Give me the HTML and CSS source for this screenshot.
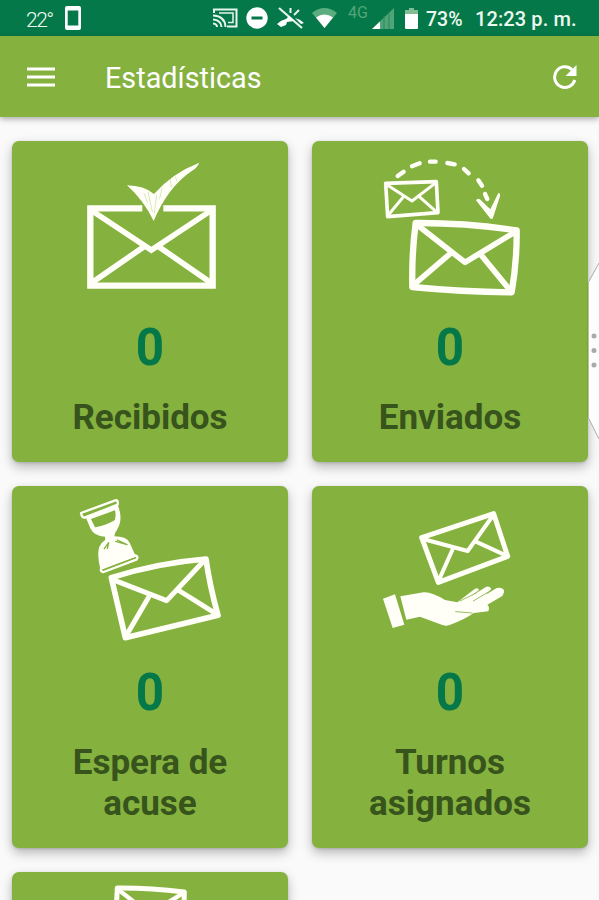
FILE: index.html
```html
<!DOCTYPE html>
<html lang="es">
<head>
<meta charset="utf-8">
<title>Estadísticas</title>
<link rel="stylesheet" href="styles.css">
</head>
<body>
<div class="screen">
  <div class="status">
    <span class="temp">22°</span>
    <svg class="phone" width="16" height="24" viewBox="0 0 16 24"><path fill="#fff" fill-rule="evenodd" d="M2 0H14Q16 0 16 2V22Q16 24 14 24H2Q0 24 0 22V2Q0 0 2 0ZM2.700 4.500V19.500H13.300V4.500Z"/></svg>
    <svg class="cast" width="25" height="20" viewBox="0 0 25 20" fill="none" stroke="#e6f5ea" stroke-width="2"><path d="M1 5V1.500H23.500V18.500H14"/><path d="M6 5H20V14.500H15" stroke-width="1.500"/><path d="M0 7.500Q12 8 12.500 19M0 11.500Q8 12 8.500 19M0 15.500Q4 16 4 19"/></svg>
    <svg class="dnd" width="22" height="22" viewBox="0 0 22 22"><circle cx="11" cy="11" r="10.700" fill="#fff"/><path d="M5.500 11H16.500" stroke="#047848" stroke-width="3"/></svg>
    <svg class="call" width="27" height="22" viewBox="0 0 27 22" fill="none" stroke="#e6f5ea" stroke-width="2"><path d="M2 1L25 21" stroke-width="2.200"/><path d="M13.500 1V6M22 3L17 8"/><path fill="#fff" stroke="none" d="M0 17Q4 13 9 12L12 9L17 14L10 15L9 18L4 20ZM18 11Q23 12 27 16L24 17Z"/></svg>
    <svg class="wifi" width="25" height="20" viewBox="0 0 25 20"><path fill="#5bad80" d="M0 5Q12.500-5 25 5L12.500 20Z"/><path fill="#fff" d="M4 9.500Q12.500 3.500 21 9.500L12.500 20Z"/></svg>
    <span class="network">4G</span>
    <svg class="signal" width="22" height="21" viewBox="0 0 22 21"><path fill="#51a477" d="M0 21L22 0V21Z"/><path fill="#fff" d="M0 21L8 13.500V21Z"/><path d="M12 8V21M17 4V21" stroke="#24895d" stroke-width="1"/></svg>
    <svg class="battery" width="13" height="21" viewBox="0 0 13 21"><path fill="#80bd94" d="M4 0H9V2H13V7H0V2H4Z"/><path fill="#fff" d="M0 6H13V20Q13 21 12 21H1Q0 21 0 20Z"/></svg>
    <span class="percent">73%</span>
    <span class="time">12:23 p. m.</span>
  </div>
  <header class="appbar">
    <svg class="menu" width="28" height="20" viewBox="0 0 28 20"><path d="M0 2H28M0 10H28M0 18H28" stroke="#fff" stroke-width="2.800"/></svg>
    <h1>Estadísticas</h1>
    <svg class="refresh" width="26" height="26" viewBox="0 0 26 26"><path d="M20.200 5.800A10.300 10.300 0 1 0 22.800 16" fill="none" stroke="#fff" stroke-width="3"/><path d="M24.500 1V12H13.500Z" fill="#fff"/></svg>
  </header>
  <main class="grid">
    <section class="card">
      <svg class="art" viewBox="0 0 276 165"><g transform="translate(58 9) scale(.33333)">
        <path d="M217 175H61V407H428V175H280" stroke-width="19" stroke-linejoin="miter" stroke-linecap="butt"/>
        <path d="M67 183L244 300L421 183M67 397L219 292M421 397L269 292" stroke-width="17" stroke-linejoin="miter"/>
        <path class="solid" d="M171 106Q222 107 252 132Q307 69 388 38Q380 55 365 63Q294 111 251 213Q221 151 171 106Z"/>
        <path class="sketch" d="M222 130L232 157M234 127L247 185M260 135L253 190M276 115L269 145M301 90L304 111M317 81L320 93"/>
      </g></svg>
      <div class="number">0</div><div class="label">Recibidos</div>
    </section>
    <section class="card">
      <svg class="art" viewBox="0 0 276 165"><g transform="translate(58 9) scale(.33333)">
        <path d="M47 100L199 95L204 188L53 200Z" stroke-width="11"/>
        <path d="M47 102L126 153L199 97M53 197L98 143M202 188L147 139" stroke-width="9"/>
        <path d="M83 78L101 65M126 49L149 40M180 35L197 35M232 39L254 43M282 57L296 70M325 91L336 107M345 132L352 147" stroke-width="13"/>
        <path class="solid" d="M318 151Q322 143 330 148L361 178L385 129Q392 129 390 139L368 206Q363 208 359 203Z"/>
        <path d="M137 219Q285 218 440 241Q441 335 425 427Q278 426 127 411Q125 308 137 219Z" stroke-width="19"/>
        <path d="M139 223L285 337L435 246M132 404L238 313M420 421L335 317" stroke-width="17"/>
      </g></svg>
      <div class="number">0</div><div class="label">Enviados</div>
    </section>
    <section class="card">
      <svg class="art" viewBox="0 0 276 165"><g transform="translate(53 4) scale(.33333)">
        <path d="M48 69L151 31Q160 29 158 44L59 83Q51 84 48 69ZM108 236L211 196Q222 199 214 209L116 246Q106 247 108 236Z" stroke-width="7"/>
        <path class="solid" fill-rule="evenodd" d="M61 79L158 44Q176 88 156 119Q148 130 148 139Q184 139 194 158L213 200L106 238Q95 193 103 170Q108 158 121 149L120 140Q88 140 76 115ZM78 87L90 112Q121 107 149 91Q154 76 150 61Z"/>
        <path d="M118 176L131 158L127 175M157 150L186 164L152 154" stroke="#85b13f" stroke-width="4"/>
        <path d="M139 263Q276 219 423 207Q434 287 459 376L181 443Z" stroke-width="17"/>
        <path d="M143 269L305 332L419 210M183 438L250 323M456 373L344 303" stroke-width="15"/>
      </g></svg>
      <div class="number">0</div><div class="label">Espera de<br>acuse</div>
    </section>
    <section class="card">
      <svg class="art" viewBox="0 0 276 165"><g transform="translate(58 14) scale(.33333)">
        <path d="M155 113L371 41L413 169L205 247Z" stroke-width="15"/>
        <path d="M159 117L293 153L370 45M206 242L247 150M409 167L316 124" stroke-width="12"/>
        <path class="solid" d="M39 296L75 283L103 374L68 384ZM91 289L161 277Q184 275 225 300L262 307L315 266Q326 263 327 270L303 289L349 260Q361 257 364 267L347 284L380 264Q397 260 402 271Q403 282 397 288L352 314Q360 320 355 334L311 339Q287 357 237 376Q224 379 211 373L150 350L109 359Z"/>
        <path d="M270 303L320 278M310 303L355 276M257 335L306 339" stroke="#85b13f" stroke-width="2.500"/>
      </g></svg>
      <div class="number">0</div><div class="label">Turnos<br>asignados</div>
    </section>
    <section class="card">
      <svg class="art" viewBox="0 0 276 165"><g transform="translate(-12 -42) scale(.33333)">
        <path d="M352 174Q445 173 553 186L550 315L345 309Z" stroke-width="15"/>
        <path d="M354 178L448 252L550 189M348 302L420 235M547 312L485 235" stroke-width="13"/>
      </g></svg>
    </section>
  </main>
  <svg class="edge" width="12" height="180" viewBox="0 0 12 180"><path d="M12 4L1 24V158L12 180Z" fill="#fdfdfd"/><path d="M12 4L1 24M1 158L12 180" stroke="#aaa" fill="none"/><path d="M1 24V158" stroke="#719536"/><g fill="#aaa"><circle cx="7" cy="77" r="2.500"/><circle cx="7" cy="91.500" r="2.500"/><circle cx="7" cy="106" r="2.500"/></g></svg>
</div>
</body>
</html>
```
FILE: styles.css
```css
* { box-sizing: border-box; }
body { margin: 0; background: #fafafa; font-family: Roboto, sans-serif; }
svg { display: block; flex: none; }
.screen { position: relative; height: 900px; overflow: hidden; }
.status { height: 36px; background: #047848; color: #eef8ef; display: flex; align-items: center; white-space: nowrap; }
.temp { width: 24px; margin-left: 26px; padding-top: 3px; font-size: 21px; font-weight: 300; letter-spacing: -1.500px; }
.phone { margin-left: 15px; }
.cast { margin-left: 132px; }
.dnd { margin-left: 8px; }
.call { margin-left: 9px; }
.wifi { margin-left: 8px; }
.network { width: 23px; margin-left: 11px; padding-bottom: 11px; color: #54a57a; font-size: 16px; }
.signal { margin-left: 1px; }
.battery { margin-left: 11px; }
.percent { width: 49px; margin-left: 8px; font-size: 19.500px; font-weight: 500; padding-top: 2px; }
.time { font-size: 20px; font-weight: 500; padding-top: 2px; letter-spacing: .1px; }
.appbar { height: 81px; padding: 0 21px 0 27px; background: #85b13f; color: #fff; display: flex; align-items: center; box-shadow: 0 2px 6px #0005; }
.appbar h1 { flex: 1; margin: 3px 0 0 50px; font-size: 28.800px; font-weight: 400; line-height: 36px; }
.grid { display: grid; grid-template-columns: 276px 276px; gap: 24px; padding: 24px 12px; }
.card { background: #85b13f; border-radius: 7px; text-align: center; padding-bottom: 24px; box-shadow: 0 5px 12px #0004, 0 1px 3px #0002; }
.art { width: 276px; height: 165px; fill: none; stroke: #fffff8; stroke-linecap: round; stroke-linejoin: round; }
.art .solid { fill: #fffff8; stroke: none; }
.art .sketch { stroke: #d9e7bf; stroke-width: 3; }
.number { margin-top: 12px; color: #047848; font-size: 52px; line-height: 60px; font-weight: 700; transform: scaleX(.95); }
.label { margin-top: 19px; color: #36541b; font-size: 35px; line-height: 41px; font-weight: 700; }
.edge { position: absolute; right: 0; top: 259px; }
```
